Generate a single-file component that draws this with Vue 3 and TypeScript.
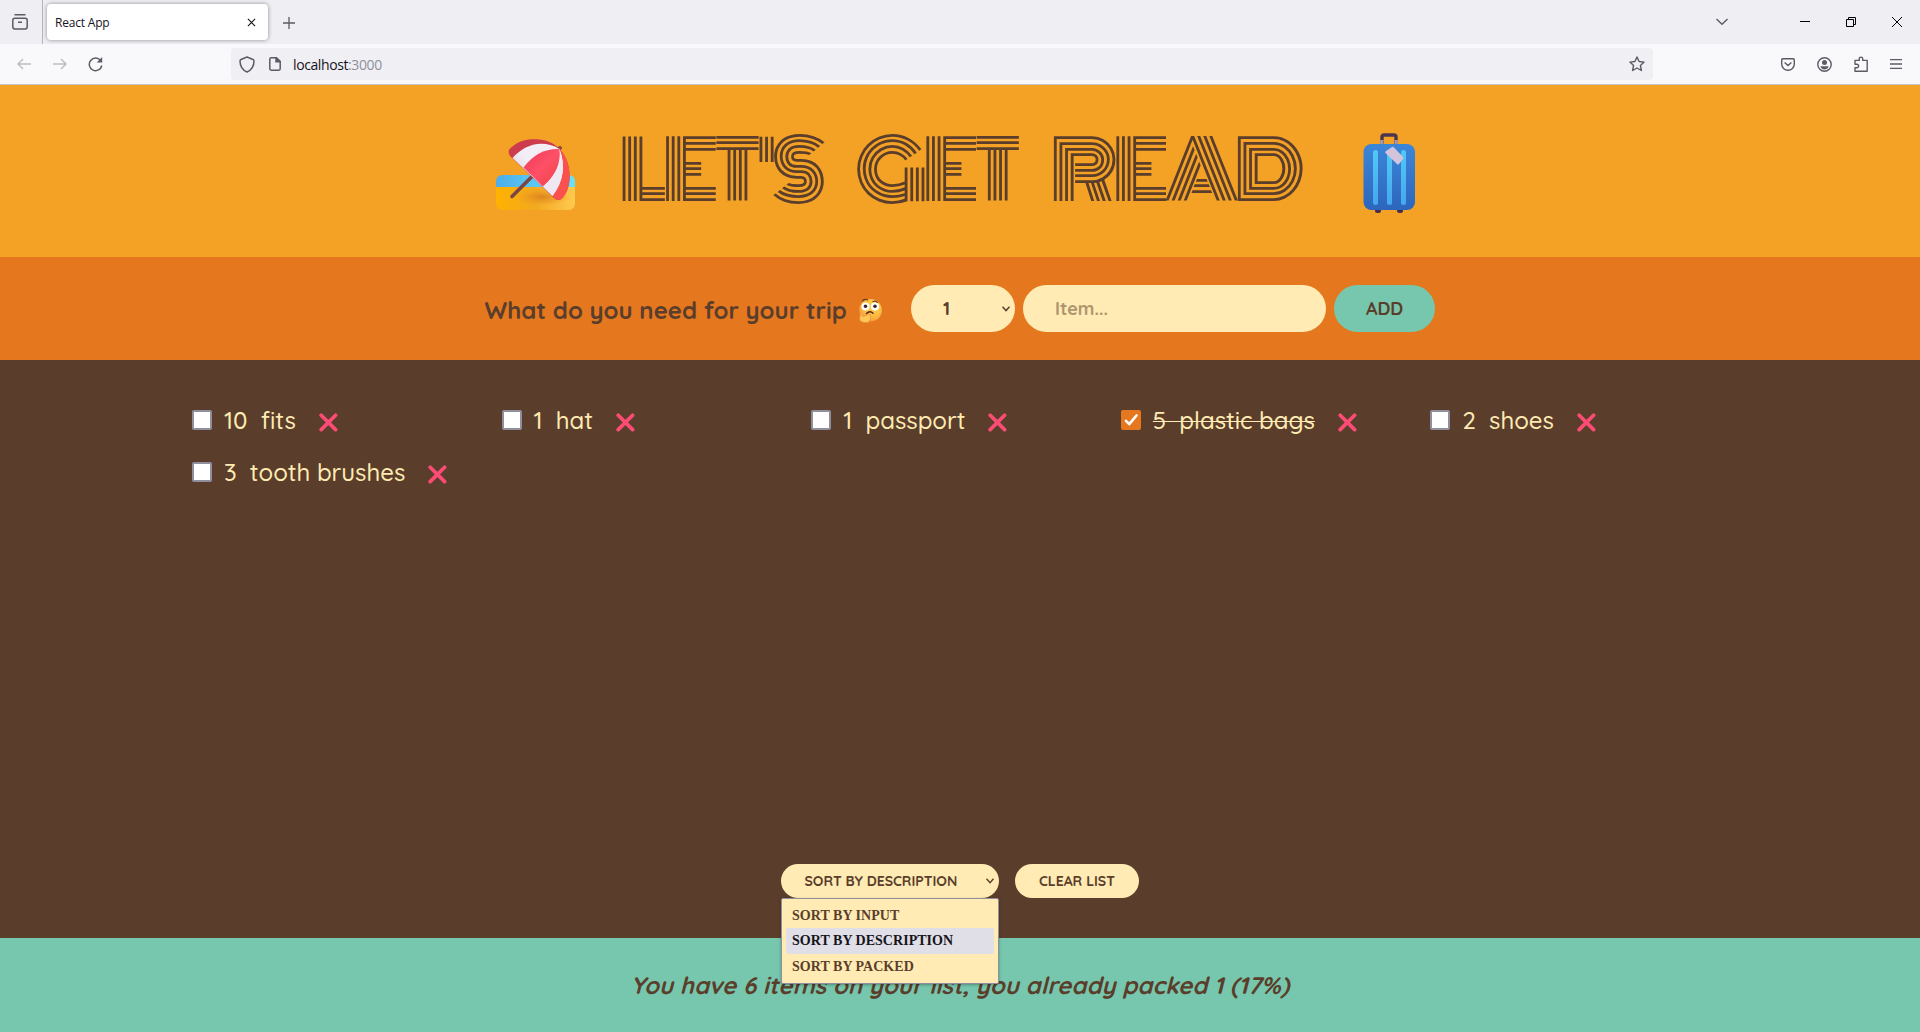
<script setup lang="ts">
interface Item {
  id: number
  quantity: number
  description: string
  packed: boolean
}

const items: Item[] = [
  { id: 1, quantity: 10, description: 'fits', packed: false },
  { id: 2, quantity: 1, description: 'hat', packed: false },
  { id: 3, quantity: 1, description: 'passport', packed: false },
  { id: 4, quantity: 5, description: 'plastic bags', packed: true },
  { id: 5, quantity: 2, description: 'shoes', packed: false },
  { id: 6, quantity: 3, description: 'tooth brushes', packed: false },
]

const sortOptions = ['Sort by input', 'Sort by description', 'Sort by packed']
const sortBy = 'Sort by description'

const packed = items.filter((i) => i.packed).length
const percent = Math.round((packed / items.length) * 100)
</script>

<template>
  <div class="window">
    <div class="tabs">
      <div class="view-btn">
        <svg width="18" height="18" viewBox="0 0 18 18" fill="none" stroke="#5b5b66" stroke-width="1.5">
          <path d="M3.5 1.8h11M1.8 7.2c0-1.3.8-2 2-2h10.400c1.200 0 2 .7 2 2v6.600c0 1.300-.8 2.200-2 2.200H3.800c-1.200 0-2-.9-2-2.200zM7 9.200h4" />
        </svg>
      </div>
      <div class="tab">
        <span class="tab-title">React App</span>
        <svg width="9" height="9" viewBox="0 0 10 10" stroke="#15141a" stroke-width="1.2"><path d="M1 1l8 8M9 1l-8 8" /></svg>
      </div>
      <svg class="plus" width="12" height="12" viewBox="0 0 12 12" stroke="#5b5b66" stroke-width="1.3"><path d="M6 0v12M0 6h12" /></svg>
      <div class="win-controls">
        <svg width="12" height="8" viewBox="0 0 12 8" fill="none" stroke="#5b5b66" stroke-width="1.4"><path d="M.5 1l5.500 5.300L11.500 1" /></svg>
        <svg width="10" height="10" viewBox="0 0 10 10" stroke="#000"><path d="M0 4.500h10" /></svg>
        <svg width="10" height="10" viewBox="0 0 10 10" fill="none" stroke="#000"><path d="M.5 2.500h7v7h-7zM2.500 2.500v-2h7v7h-2" /></svg>
        <svg width="10" height="10" viewBox="0 0 10 10" stroke="#000"><path d="M0 0l10 10M10 0L0 10" /></svg>
      </div>
    </div>

    <div class="nav">
      <div class="nav-left">
        <svg width="14" height="12" viewBox="0 0 14 12" fill="none" stroke="#bcbcc2" stroke-width="1.400"><path d="M14 6H1M6 1L1 6l5 5" /></svg>
        <svg width="14" height="12" viewBox="0 0 14 12" fill="none" stroke="#bcbcc2" stroke-width="1.400"><path d="M0 6h13M8 1l5 5-5 5" /></svg>
        <svg width="15" height="15" viewBox="0 0 15 15" fill="none" stroke="#5b5b66" stroke-width="1.500"><path d="M12.600 3.500A6.300 6.300 0 1 0 13.800 8.500" /><path d="M14.200 0v5.500H8.700z" fill="#5b5b66" stroke="none" /></svg>
      </div>
      <div class="urlbar">
        <svg class="shield" width="16" height="17" viewBox="0 0 16 17" fill="none" stroke="#5b5b66" stroke-width="1.500" stroke-linejoin="round"><path d="M8 1l6 2.500c.8.400 1 .8 1 1.500 0 5-2.500 9-7 11-4.500-2-7-6-7-11 0-.7.200-1.100 1-1.500z" /></svg>
        <svg class="page" width="12" height="14" viewBox="0 0 12 14" fill="none" stroke="#5b5b66" stroke-width="1.500"><path d="M7.500.8H2.200C1.300.8.8 1.300.8 2.200v9.600c0 .9.500 1.400 1.400 1.400h7.600c.9 0 1.400-.5 1.400-1.400V4.500z" /><path d="M7 .8v4h4.500z" fill="#5b5b66" /></svg>
        <span class="url">localhost<i>:3000</i></span>
        <svg class="star" width="16" height="16" viewBox="0 0 16 16" fill="none" stroke="#5b5b66" stroke-width="1.400" stroke-linejoin="round"><path d="M8 1l2.100 4.500 5 .6-3.700 3.400 1 5L8 12l-4.400 2.500 1-5L.9 6.100l5-.6z" /></svg>
      </div>
      <div class="nav-right">
        <svg width="14" height="13" viewBox="0 0 14 13" fill="none" stroke="#5b5b66" stroke-width="1.400"><path d="M1.800.8h10.400c.7 0 1.100.4 1.100 1.100V6c0 3.500-2.800 6.200-6.300 6.200S.7 9.500.7 6V1.900C.7 1.200 1.100.8 1.800.8zM3.600 4.400L7 7.600l3.400-3.200" /></svg>
        <svg width="15" height="15" viewBox="0 0 15 15"><circle cx="7.500" cy="7.500" r="6.700" fill="none" stroke="#5b5b66" stroke-width="1.400" /><circle cx="7.500" cy="5.400" r="2.500" fill="#5b5b66" /><path d="M3.500 9.300h8c0 2-1.800 3.200-4 3.200s-4-1.200-4-3.200z" fill="#5b5b66" /></svg>
        <svg width="14" height="16" viewBox="0 0 14 16" fill="none" stroke="#5b5b66" stroke-width="1.400" stroke-linejoin="round"><path d="M1 6V4.400h4.300V2.800a1.700 1.700 0 0 1 3.400 0v1.600h4.500v10.800H1v-3.400h1.800a1.700 1.700 0 0 0 0-3.600H1z" /></svg>
        <svg width="12" height="10" viewBox="0 0 12 10" stroke="#5b5b66" stroke-width="1.300"><path d="M0 .7h12M0 5h12M0 9.300h12" /></svg>
      </div>
    </div>

    <header class="banner">
      <svg class="beach" width="80" height="72" viewBox="0 0 80 72">
        <defs>
          <linearGradient id="sea"><stop offset="0" stop-color="#4eade9" /><stop offset="1" stop-color="#66e4fb" /></linearGradient>
          <linearGradient id="sand"><stop offset="0" stop-color="#ffb200" /><stop offset=".5" stop-color="#f3a91f" /><stop offset="1" stop-color="#ffca50" /></linearGradient>
          <radialGradient id="shade"><stop offset="0" stop-color="#dd8320" /><stop offset="1" stop-color="#e99a20" stop-opacity="0" /></radialGradient>
          <linearGradient id="red" x1="0" y1="0" x2="1" y2="1"><stop offset="0" stop-color="#e93855" /><stop offset=".5" stop-color="#ff5068" /><stop offset="1" stop-color="#ee4144" /></linearGradient>
          <linearGradient id="cloth" x1="0" y1="1" x2="1" y2="0"><stop offset="0" stop-color="#d2c8df" /><stop offset=".5" stop-color="#f3edf5" /></linearGradient>
        </defs>
        <path d="M0 49V43q0-7 7-7h65q7 0 7 7v6z" fill="url(#sea)" />
        <path d="M0 48h79V64q0 7-7 7H7q-7 0-7-7z" fill="url(#sand)" />
        <ellipse cx="46" cy="58" rx="28" ry="9" fill="url(#shade)" />
        <path d="M16 57.500L38 35.500" stroke="#7b4543" stroke-width="3.600" stroke-linecap="round" />
        <path d="M61 10.500l3-1.500" stroke="#8d4a38" stroke-width="4" stroke-linecap="round" />
        <path d="M13.500 10C22 2 30 0 40 .300 50 .5 58 4 63.500 10 71 17 74.500 30 73.500 41 73 48 70 55 66.500 59q-4 4-8.500 0L14 17q-2.500-3.500-.5-7z" fill="#cc3c4c" />
        <path d="M16.500 19C27 7 45-1 63.500 10 71 22 71 43 56.500 57z" fill="url(#cloth)" />
        <path d="M27.500 28.500Q42 9 63.500 10 67 31 47 47.500z" fill="url(#red)" />
        <path d="M63.500 10C71 17 74.500 30 73.500 41 73 48 70 55 66.500 59q-4 4-8.500 0L56.500 57Q73 35 63.500 10z" fill="#fa514e" />
        <path d="M63.500 10Q73 35 56.500 57L47 47.500Q66 31 63.500 10z" fill="#efe8f3" />
      </svg>

      <h1>Let's get read</h1>

      <svg class="case" width="54" height="82" viewBox="0 0 54 82">
        <defs>
          <linearGradient id="shell" x1="0" y1="0" x2="0" y2="1"><stop offset="0" stop-color="#3c86d8" /><stop offset="1" stop-color="#2c66bd" /></linearGradient>
          <linearGradient id="rib" x1="0" y1="0" x2="0" y2="1"><stop offset="0" stop-color="#50c9f6" /><stop offset="1" stop-color="#46a7ee" /></linearGradient>
        </defs>
        <path d="M19 12V4q0-2 2-2h10q2 0 2 2v8" fill="none" stroke="#4c3450" stroke-width="3.400" />
        <path d="M18.800 7v5M33.200 7v5" stroke="#a598a9" stroke-width="3.400" />
        <rect x="12" y="74" width="6" height="6" rx="2.500" fill="#432d4d" />
        <rect x="34" y="74" width="6" height="6" rx="2.500" fill="#432d4d" />
        <rect x=".5" y="11" width="51.500" height="66" rx="8" fill="url(#shell)" />
        <rect x="10" y="17" width="5" height="55" rx="2.500" fill="url(#rib)" />
        <rect x="24" y="17" width="5" height="55" rx="2.500" fill="url(#rib)" />
        <rect x="38" y="17" width="5" height="55" rx="2.500" fill="url(#rib)" />
        <path d="M23 18l6-4q1-.6 2 .4l9 9.600q1 1 0 2l-4 5q-1 1-2 0L22.500 20q-1-1 .5-2z" fill="#d3c4dc" />
      </svg>
    </header>

    <form class="add-form" @submit.prevent>
      <h3>What do you need for your trip</h3>
      <svg class="think" width="24" height="25" viewBox="0 0 24 25">
        <defs>
          <radialGradient id="face" cx=".65" cy=".3" r=".8"><stop offset="0" stop-color="#ffd84a" /><stop offset=".7" stop-color="#f9b33c" /><stop offset="1" stop-color="#ee7d4f" /></radialGradient>
        </defs>
        <circle cx="12.500" cy="12.300" r="11.300" fill="url(#face)" />
        <circle cx="7.500" cy="8.500" r="4" fill="#fff" />
        <circle cx="17" cy="8.500" r="4" fill="#fff" />
        <circle cx="7.500" cy="8.300" r="1.800" fill="#3b2534" />
        <circle cx="17" cy="8.300" r="1.800" fill="#3b2534" />
        <path d="M4.500 2.800q2.500-2 5-1M15 3.500q3-1.200 4.500.8" fill="none" stroke="#6b3f2c" stroke-width="1.300" stroke-linecap="round" />
        <path d="M8.500 15.600q3.500-3.600 6.500-.4" fill="none" stroke="#55262c" stroke-width="1.500" stroke-linecap="round" />
        <path d="M2.500 16q1-1 1.600.6l.7 2L11 16.200q2-.2 1.200 1.600 1.200 1 .2 2.200.4 1.600-.8 2.200.2 2.400-4 2.400-5.800 0-6-4z" fill="#ffc556" stroke="#e98d35" stroke-width=".6" />
      </svg>
      <div class="pill qty">
        <span>1</span>
        <svg width="8" height="6" viewBox="0 0 8 6" fill="none" stroke="#5a3e2b" stroke-width="1.500"><path d="M.5.800L4 4.600 7.500.800" /></svg>
      </div>
      <div class="pill item-input">Item...</div>
      <div class="pill add">ADD</div>
    </form>

    <main class="list">
      <ul>
        <li v-for="item in items" :key="item.id">
          <span class="check" :class="{ on: item.packed }">
            <svg v-if="item.packed" width="20" height="20" viewBox="0 0 20 20" fill="none" stroke="#fff" stroke-width="2.600" stroke-linecap="round" stroke-linejoin="round"><path d="M5 10.800l3.300 3.400L15.500 5.500" /></svg>
          </span>
          <span class="label" :class="{ done: item.packed }">{{ item.quantity }}&nbsp; {{ item.description }}</span>
          <svg class="cross" width="19" height="19" viewBox="0 0 19 19" fill="none" stroke="#fc4c75" stroke-width="3.700" stroke-linecap="round"><path d="M2.200 2.200l14.400 14.400M16.600 2.200L2.200 16.600" /></svg>
        </li>
      </ul>
      <div class="actions">
        <div class="pill small sort">
          <span>{{ sortBy.toUpperCase() }}</span>
          <svg width="8" height="6" viewBox="0 0 8 6" fill="none" stroke="#5a3e2b" stroke-width="1.400"><path d="M.5.800L4 4.600 7.500.800" /></svg>
          <div class="menu">
            <div v-for="opt in sortOptions" :key="opt" class="option" :class="{ active: opt === sortBy }">{{ opt.toUpperCase() }}</div>
          </div>
        </div>
        <div class="pill small clear">CLEAR LIST</div>
      </div>
    </main>

    <footer class="stats">
      <em>You have {{ items.length }} items on your list, you already packed {{ packed }} ({{ percent }}%)</em>
    </footer>
  </div>
</template>

<style>
body { margin: 0; overflow: hidden; }
</style>

<style scoped>
* { box-sizing: border-box; }
svg { display: block; flex: none; }
.window {
  width: 1920px; height: 1032px; display: flex; flex-direction: column;
  font-family: Quicksand, Lato, sans-serif; color: #5a3e2b; overflow: hidden;
}
.tabs { height: 44px; flex: none; background: #efeef3; display: flex; align-items: center; font-family: "Open Sans", "Noto Sans", sans-serif; }
.view-btn { width: 43px; height: 44px; padding: 13px 0 0 11px; border-right: 1px solid #b5b4ba; }
.tab {
  width: 221px; height: 36px; margin-left: 4px; padding: 0 12px 0 8px; background: #fff; border-radius: 4px;
  box-shadow: 0 0 4px rgba(0, 0, 0, .4); display: flex; align-items: center; justify-content: space-between;
}
.tab-title { font-size: 12px; color: #15141a; letter-spacing: -.2px; }
.plus { margin: 1px 0 0 15px; }
.win-controls { margin-left: auto; display: flex; align-items: center; padding-right: 18px; }
.win-controls svg:nth-child(1) { margin-right: 72px; }
.win-controls svg:nth-child(2), .win-controls svg:nth-child(3) { margin-right: 36px; }
.nav { height: 41px; flex: none; background: #f9f9fb; border-bottom: 1px solid #c4c4ca; display: flex; align-items: center; }
.nav-left { width: 231px; padding-left: 17px; display: flex; align-items: center; gap: 22px; }
.nav-left svg:last-child { margin-left: -1px; }
.urlbar { width: 1422px; height: 32px; background: #f0eff4; border-radius: 4px; display: flex; align-items: center; padding: 0 8px 0 8px; }
.page { margin-left: 14px; }
.url { margin-left: 12px; font: 14px "Open Sans", "Noto Sans", sans-serif; color: #15141a; letter-spacing: -.4px; }
.url i { font-style: normal; color: #8f8f9d; }
.star { margin-left: auto; }
.nav-right { margin-left: auto; display: flex; align-items: center; gap: 22px; padding-right: 18px; }

.banner { height: 172px; flex: none; background: #f4a226; display: flex; align-items: flex-start; padding-left: 496px; }
.beach { margin-top: 54px; }
h1 {
  width: 744px; height: 172px; margin: 0 0 0 43px; line-height: 172px; white-space: nowrap;
  font-family: Monoton, Lato, sans-serif; font-weight: 400; font-size: 80px;
  text-transform: uppercase; letter-spacing: -5px; word-spacing: 30px;
}
.case { margin: 48px 0 0 0; }

.add-form { height: 103px; flex: none; background: #e5771f; display: flex; align-items: flex-start; padding: 28px 0 0 484.5px; }
h3 { margin: 9px 0 0; width: 373.5px; font-size: 24px; line-height: 32px; font-weight: 700; white-space: nowrap; }
.think { margin: 13px 29px 0 0; }
.pill { height: 47px; border-radius: 24px; background: #ffebb3; font-size: 18px; font-weight: 700; display: flex; align-items: center; white-space: nowrap; flex: none; }
.qty { width: 104px; padding: 0 5px 0 32px; justify-content: space-between; }
.item-input { width: 303px; margin-left: 8px; padding-left: 32px; color: #ad956f; font-weight: 700; }
.add { width: 101px; margin-left: 8px; justify-content: center; background: #76c7ad; }

.list { height: 578px; flex: none; background: #5a3e2b; color: #ffebb3; display: flex; flex-direction: column; align-items: center; justify-content: space-between; padding: 44px 0 40px; }
ul { width: 1536px; margin: 0; padding: 0; list-style: none; display: grid; grid-template-columns: repeat(5, 1fr); column-gap: 12px; }
li { height: 52px; display: flex; align-items: center; padding-bottom: 20px; }
.check { width: 20px; height: 20px; flex: none; background: #fff; border: 2px solid #8f8f9d; border-radius: 2px; }
.check.on { border: 0; background: #e5771f; }
.label { margin-left: 12px; font-size: 24px; line-height: 32px; font-weight: 500; white-space: nowrap; }
.done { text-decoration: line-through; text-decoration-thickness: 1px; }
.cross { margin: 5px 0 0 23px; }
.actions { display: flex; gap: 16px; color: #5a3e2b; }
.small { height: 34px; font-size: 14px; }
.sort { position: relative; width: 218px; padding: 0 5px 0 23.5px; justify-content: space-between; }
.clear { width: 124px; justify-content: center; }
.menu {
  position: absolute; left: 0; top: 34px; width: 218px; height: 86px; padding: 4px; background: #ffebb3;
  border: 1px solid #8f8f9d; border-radius: 2px; box-shadow: 0 1px 3px rgba(0, 0, 0, .3); z-index: 2;
}
.option { height: 26px; padding-left: 6px; border-radius: 2px; font: 700 14px/25px "Liberation Serif", serif; letter-spacing: .03px; }
.option:first-child { height: 25px; }
.option.active { background: #e0dfe7; color: #15141a; line-height: 26px; }
.stats { height: 94px; flex: none; background: #76c7ad; display: flex; justify-content: center; padding-top: 31px; font-size: 24px; line-height: 32px; font-weight: 700; }
.stats em { white-space: nowrap; }
</style>
